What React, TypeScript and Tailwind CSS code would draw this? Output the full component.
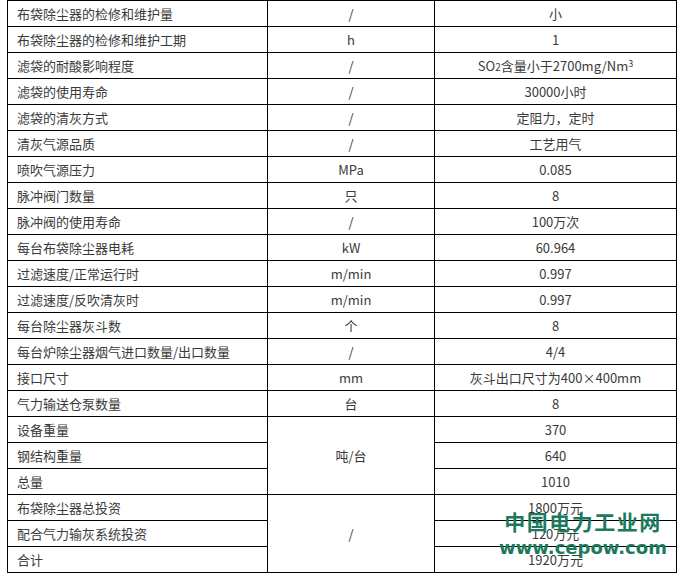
import React from "react";

type Row = { name: string; unit?: React.ReactNode; unitSpan?: number; value: React.ReactNode };

const rows: Row[] = [
  { name: "布袋除尘器的检修和维护量", unit: "/", value: "小" },
  { name: "布袋除尘器的检修和维护工期", unit: "h", value: "1" },
  {
    name: "滤袋的耐酸影响程度",
    unit: "/",
    value: (
      <>
        SO<span className="text-[10px]">2</span>含量小于2700mg/Nm<sup className="text-[9px]">3</sup>
      </>
    ),
  },
  { name: "滤袋的使用寿命", unit: "/", value: "30000小时" },
  { name: "滤袋的清灰方式", unit: "/", value: "定阻力，定时" },
  { name: "清灰气源品质", unit: "/", value: "工艺用气" },
  { name: "喷吹气源压力", unit: "MPa", value: "0.085" },
  { name: "脉冲阀门数量", unit: "只", value: "8" },
  { name: "脉冲阀的使用寿命", unit: "/", value: "100万次" },
  { name: "每台布袋除尘器电耗", unit: "kW", value: "60.964" },
  { name: "过滤速度/正常运行时", unit: "m/min", value: "0.997" },
  { name: "过滤速度/反吹清灰时", unit: "m/min", value: "0.997" },
  { name: "每台除尘器灰斗数", unit: "个", value: "8" },
  { name: "每台炉除尘器烟气进口数量/出口数量", unit: "/", value: "4/4" },
  { name: "接口尺寸", unit: "mm", value: "灰斗出口尺寸为400×400mm" },
  { name: "气力输送仓泵数量", unit: "台", value: "8" },
  { name: "设备重量", unit: "吨/台", unitSpan: 3, value: "370" },
  { name: "钢结构重量", value: "640" },
  { name: "总量", value: "1010" },
  { name: "布袋除尘器总投资", unit: "/", unitSpan: 3, value: "1800万元" },
  { name: "配合气力输灰系统投资", value: "120万元" },
  { name: "合计", value: "1920万元" },
];

export default function App() {
  return (
    <div
      className="relative w-[683px] h-[577px] bg-white text-[13px] text-[#3a3a3a]"
      style={{ fontFamily: '"Noto Sans CJK SC", "Noto Sans", sans-serif' }}
    >
      <div className="pl-[7px]">
        <table className="table-fixed border-collapse w-[669px]">
          <colgroup>
            <col className="w-[260px]" />
            <col className="w-[167px]" />
            <col className="w-[242px]" />
          </colgroup>
          <tbody>
            {rows.map((r, i) => (
              <tr key={i} className="h-[26px]">
                <td className="border border-black pl-[9px] leading-none">{r.name}</td>
                {r.unit !== undefined && (
                  <td rowSpan={r.unitSpan ?? 1} className="border border-black text-center leading-none">
                    {r.unit}
                  </td>
                )}
                <td className="border border-black text-center leading-none">{r.value}</td>
              </tr>
            ))}
          </tbody>
        </table>
      </div>

      {/* site watermark */}
      <div className="absolute left-[492px] top-[511px] w-[182px] flex flex-col items-center text-[#1b7a5e] font-bold leading-none">
        <div className="text-[21px] tracking-[1.5px] whitespace-nowrap">中国电力工业网</div>
        <div
          className="mt-[7px] text-[18px] whitespace-nowrap"
          style={{ fontFamily: '"DejaVu Sans", "Noto Sans", sans-serif' }}
        >
          www.cepow.com
        </div>
      </div>
    </div>
  );
}
